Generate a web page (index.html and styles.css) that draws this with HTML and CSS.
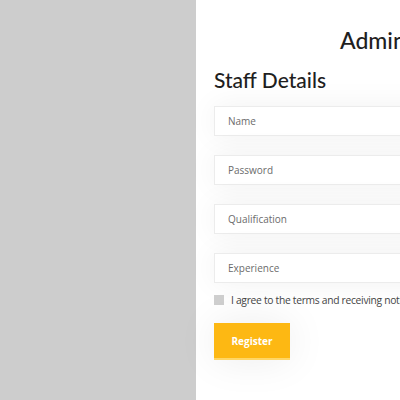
FILE: index.html
```html
<!DOCTYPE html>
<html>
<head>
<meta charset="utf-8">
<link rel="stylesheet" href="styles.css">
</head>
<body>
<div class="page">
  <aside class="side"></aside>
  <main class="panel">
    <h1 class="title">Admin Login</h1>
    <h2 class="subtitle">Staff Details</h2>
    <form class="form">
      <input class="field" type="text" placeholder="Name">
      <input class="field" type="password" placeholder="Password">
      <input class="field" type="text" placeholder="Qualification">
      <input class="field" type="text" placeholder="Experience">
      <label class="agree"><span class="box"></span><span class="agree-text">I agree to the terms and receiving notifications</span></label>
      <button class="btn" type="button">Register</button>
    </form>
  </main>
</div>
</body>
</html>
```
FILE: styles.css
```css
html, body {
  margin: 0;
  padding: 0;
  width: 400px;
  height: 400px;
  overflow: hidden;
  background: #fff;
}
.page {
  display: flex;
  width: 700px;
  height: 400px;
}
.side {
  width: 196px;
  flex: none;
  background: #cdcdcd;
}
.panel {
  flex: none;
  width: 480px;
  padding: 0 0 0 18px;
  box-sizing: border-box;
  background: #fff;
}
.title {
  margin: 28px 0 0 126px;
  font-family: "Lato", sans-serif;
  font-weight: 500;
  font-size: 23px;
  line-height: 24px;
  color: #1f1f1f;
  white-space: nowrap;
}
.subtitle {
  margin: 16px 0 0 0;
  font-family: "Lato", sans-serif;
  font-weight: 500;
  font-size: 21px;
  line-height: 24px;
  color: #1f1f1f;
}
.form {
  display: flex;
  flex-direction: column;
  align-items: flex-start;
  margin-top: 14px;
}
.field {
  width: 400px;
  height: 30px;
  box-sizing: border-box;
  margin: 0 0 19px 0;
  padding: 0 13px;
  border: 1px solid #ececec;
  background: #fff;
  box-shadow: 0 0 30px rgba(0,0,0,0.06);
  font-family: "Open Sans", sans-serif;
  font-size: 10px;
  color: #333;
  outline: none;
}
.field::placeholder {
  color: #6b6b6b;
}
.agree {
  display: flex;
  align-items: center;
  gap: 7px;
  margin-top: -9px;
  white-space: nowrap;
}
.box {
  width: 10px;
  height: 10px;
  background: #cfcfcf;
  flex: none;
}
.agree-text {
  font-family: "Open Sans", sans-serif;
  font-size: 10.3px;
  letter-spacing: -0.3px;
  color: #444;
}
.btn {
  margin-top: 16px;
  width: 76px;
  height: 37px;
  border: 0;
  border-bottom: 2px solid #ffd666;
  background: #fdb813;
  color: #fff;
  font-family: "Open Sans", sans-serif;
  font-weight: 700;
  font-size: 10px;
  box-shadow: 0 0 40px rgba(0,0,0,0.08);
  padding: 0;
}
```
